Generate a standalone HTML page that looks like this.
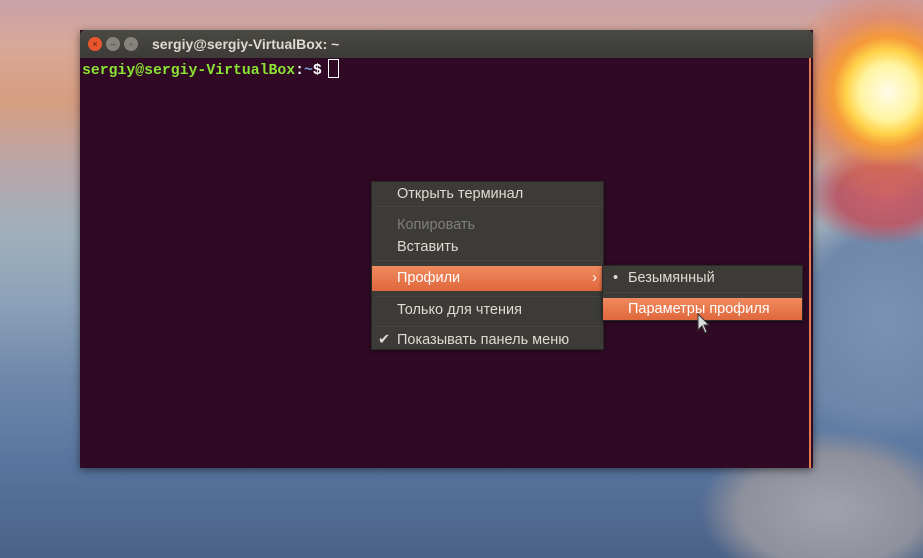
<!DOCTYPE html>
<html><head><meta charset="utf-8"><style>
*{margin:0;padding:0;box-sizing:border-box}
body{width:923px;height:558px;overflow:hidden;position:relative;font-family:"Liberation Sans","DejaVu Sans",sans-serif;
background:
radial-gradient(circle at 888px 92px,#fffbe8 0,#fff4a0 28px,#ffd24a 42px,#f59a3a 55px,rgba(235,120,70,.5) 75px,rgba(230,130,110,0) 110px),
radial-gradient(ellipse 80px 50px at 885px 195px,#c8606a 0,#b85c6a 60%,rgba(170,90,110,0) 100%),
radial-gradient(ellipse 110px 120px at 885px 320px,#7a93b5 0,#6f88aa 70%,rgba(100,120,150,0) 100%),
radial-gradient(ellipse 130px 80px at 830px 510px,#a0a2ae 0,#8e909c 70%,rgba(120,125,140,0) 100%),
linear-gradient(180deg,#c8a2aa 0,#d8a898 8%,#d79d80 18%,#b8a6aa 30%,#9fb0bc 42%,#8aa0b8 55%,#6f88aa 68%,#5a76a0 82%,#4a6186 100%);}
.win{position:absolute;left:80px;top:30px;width:733px;height:438px;background:#300a24;box-shadow:0 2px 8px rgba(0,0,0,.5)}
.tb{height:28px;background:linear-gradient(#4a4944,#3c3b37);border-radius:5px 5px 0 0;position:relative}
.btn{position:absolute;top:7px;width:14px;height:14px;border-radius:50%;font-size:9px;line-height:14px;text-align:center}
.title{position:absolute;left:72px;top:6px;color:#dfdbd2;font-size:14px;font-weight:bold}
.prompt{position:absolute;left:2px;top:29px;font-family:"Liberation Mono",monospace;font-weight:bold;font-size:14.8px;color:#8ae234}
.cur{display:inline-block;width:11px;height:19px;border:1px solid #fff;vertical-align:-4px;margin-left:6px}
.edge{position:absolute;right:2px;top:28px;width:2px;height:410px;background:#e07a4f}
.menu{position:absolute;background:#3c3b37;border:1px solid #2a2926;box-shadow:0 1px 4px rgba(0,0,0,.5);color:#dfdbd2;font-size:14.5px}
.it{position:absolute;left:0;right:0;height:24px;line-height:24px;padding-left:25px}
.sep{position:absolute;left:2px;right:2px;height:1px;background:#33322f;border-bottom:1px solid #45443f}
.hl{background:linear-gradient(#f08a5e,#e0673c);color:#fff}
</style></head><body>
<div class="win">
<div class="tb">
<div class="btn" style="left:8px;background:#e9552e;color:#5a1a0a">×</div>
<div class="btn" style="left:26px;background:#85837c;color:#3c3b37">–</div>
<div class="btn" style="left:44px;background:#85837c;color:#3c3b37">▫</div>
<div class="title">sergiy@sergiy-VirtualBox: ~</div>
</div>
<div class="prompt">sergiy@sergiy-VirtualBox<span style="color:#fff">:</span><span style="color:#729fcf">~</span><span style="color:#fff">$</span><span class="cur"></span></div>
<div class="edge"></div>
</div>
<div class="menu" style="left:371px;top:181px;width:233px;height:169px">
<div class="it" style="top:0">Открыть терминал</div>
<div class="sep" style="top:24px"></div>
<div class="it" style="top:31px;color:#7f7e78">Копировать</div>
<div class="it" style="top:53px">Вставить</div>
<div class="sep" style="top:78px"></div>
<div class="it hl" style="top:84px;height:25px">Профили<span style="position:absolute;right:6px">›</span></div>
<div class="sep" style="top:114px"></div>
<div class="it" style="top:116px">Только для чтения</div>
<div class="sep" style="top:144px"></div>
<div class="it" style="top:146px"><span style="position:absolute;left:6px">✔</span>Показывать панель меню</div>
</div>
<div class="menu" style="left:602px;top:265px;width:201px;height:56px">
<div class="it" style="top:0"><span style="position:absolute;left:10px">•</span>Безымянный</div>
<div class="sep" style="top:26px"></div>
<div class="it hl" style="top:32px;height:22px;line-height:22px">Параметры профиля</div>
</div>
<svg style="position:absolute;left:697px;top:313px" width="14" height="22" viewBox="0 0 14 22"><path d="M1 1 L1 17 L5 13 L8 20 L10 19 L7 12 L12 12 Z" fill="#ddd" stroke="#333" stroke-width="1"/></svg>
</body></html>
